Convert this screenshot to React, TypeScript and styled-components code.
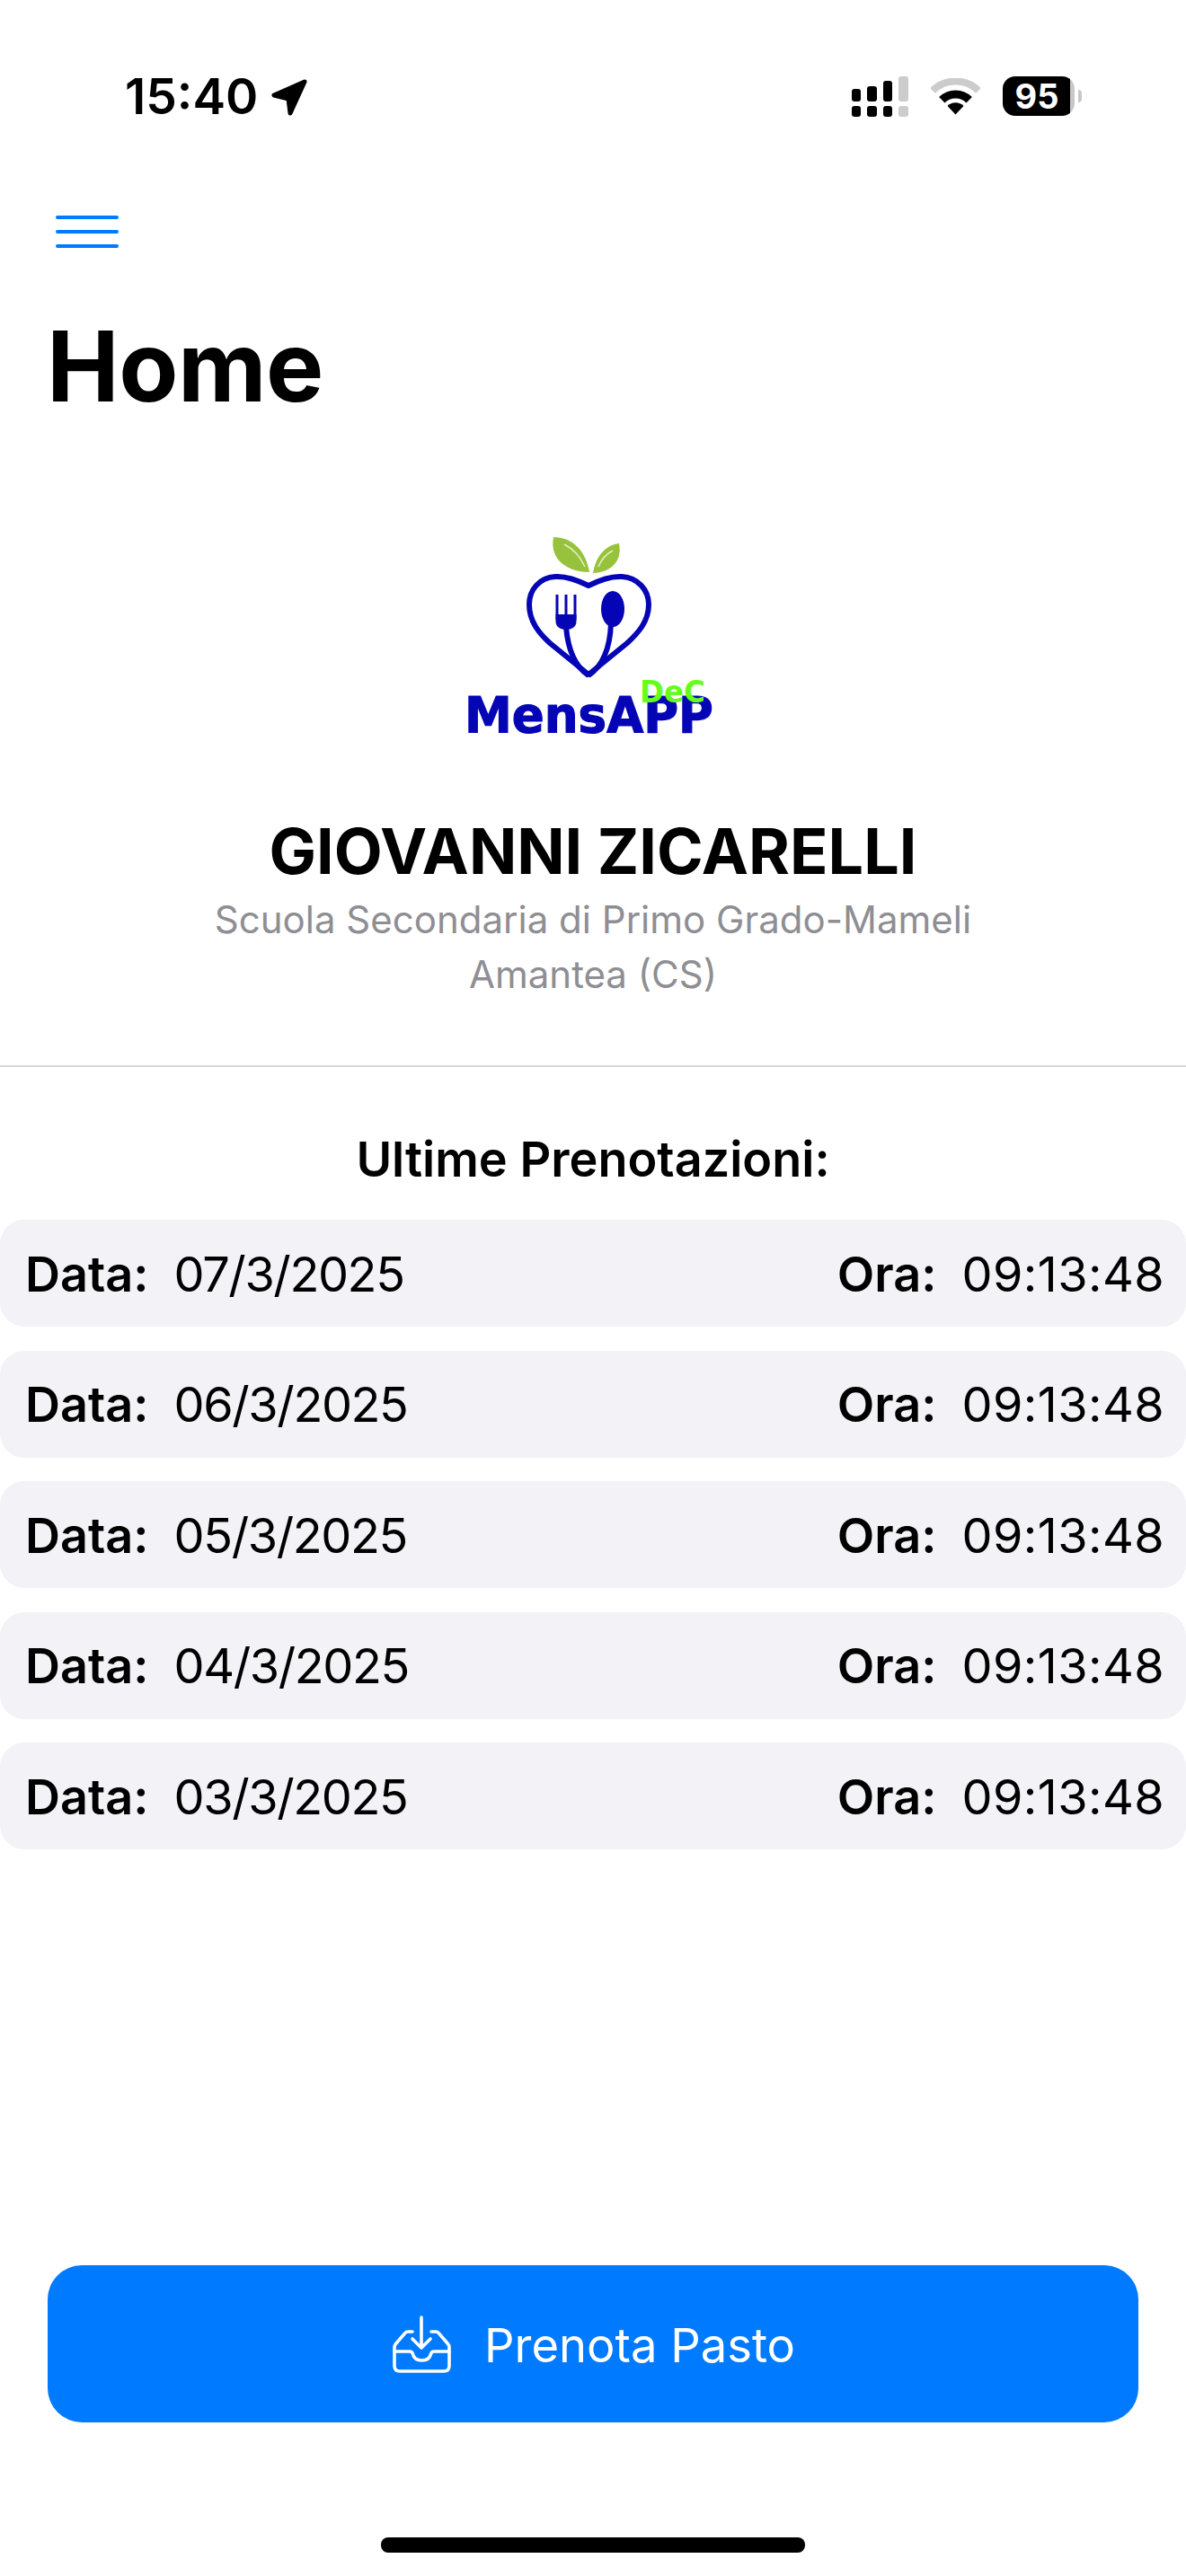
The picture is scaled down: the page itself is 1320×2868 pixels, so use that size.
import styled, { createGlobalStyle } from "styled-components";

const bookings = ["07/3/2025", "06/3/2025", "05/3/2025", "04/3/2025", "03/3/2025"];

export default function App() {
  return (
    <Page>
      <GlobalStyle />
      <StatusBar>
        <TimeGroup>
          <Clock>15:40</Clock>
          <svg width="42" height="43" viewBox="0 0 42 43">
            <path d="M38 5 L4 20 L20 24 L22 40 Z" fill="#000" stroke="#000" strokeWidth="5" strokeLinejoin="round" />
          </svg>
        </TimeGroup>
        <StatusIcons>
          <svg width="63" height="45" viewBox="0 0 63 45">
            <rect x="0" y="14" width="10" height="14" rx="3" fill="#000" />
            <rect x="0" y="33" width="10" height="12" rx="3" fill="#000" />
            <rect x="17" y="11" width="11" height="17" rx="3" fill="#000" />
            <rect x="17" y="33" width="11" height="12" rx="3" fill="#000" />
            <rect x="35" y="5" width="10" height="23" rx="3" fill="#000" />
            <rect x="35" y="33" width="10" height="12" rx="3" fill="#000" />
            <rect x="52" y="0" width="11" height="28" rx="3" fill="#ccc" />
            <rect x="52" y="33" width="11" height="12" rx="3" fill="#ccc" />
          </svg>
          <svg width="55" height="41" viewBox="0 0 55 41">
            <path d="M2 14 A36 36 0 0 1 53 14" fill="none" stroke="#ccc" strokeWidth="8" />
            <path d="M12.3 24.2 A21.5 21.5 0 0 1 42.7 24.2" fill="none" stroke="#000" strokeWidth="9" />
            <path d="M27.5 40.5 L18.5 31 A12.7 12.7 0 0 1 36.5 31 Z" fill="#000" />
          </svg>
          <Battery>
            <BatteryBody>95</BatteryBody>
            <BatteryTip />
          </Battery>
        </StatusIcons>
      </StatusBar>

      <MenuButton aria-label="Menu">
        <MenuLine />
        <MenuLine />
        <MenuLine />
      </MenuButton>

      <Title>Home</Title>

      <LogoWrap>
        <svg width="300" height="235" viewBox="510 595 300 235">
          <path d="M616 598 C638 598 652 614 656 637 C634 637 611 625 616 598 Z" fill="#97c23c" />
          <path d="M628 606 C638 611 646 620 651 631" fill="none" stroke="#e4f0c4" strokeWidth="1.5" />
          <path d="M689 605 C673 607 663 620 660 638 C679 637 693 626 689 605 Z" fill="#97c23c" />
          <path d="M682 613 C674 617 669 624 666 631" fill="none" stroke="#e4f0c4" strokeWidth="1.5" />
          <path
            d="M655 652 C645 647 632 641 618 642 C600 643 589 657 589 673 C589 692 600 705 612 716 L655 751 L698 716 C710 705 722 692 722 673 C722 657 710 643 692 642 C678 641 665 647 655 652 Z"
            fill="none"
            stroke="#0505b5"
            strokeWidth="6"
            strokeLinejoin="round"
          />
          <path d="M620 662 V690 M630 662 V690 M640 662 V690" stroke="#0505b5" strokeWidth="3" />
          <path d="M618.5 684 H641.5 V692 C641.5 698 636 701 630 701 C624 701 618.5 698 618.5 692 Z" fill="#0505b5" />
          <path d="M630 698 C632 722 640 742 655 752" fill="none" stroke="#0505b5" strokeWidth="6" />
          <ellipse cx="682" cy="678" rx="13" ry="20" fill="#0505b5" />
          <path d="M680 694 C679 722 670 742 655 752" fill="none" stroke="#0505b5" strokeWidth="6" />
          <LogoName x="517" y="815" textLength="277" lengthAdjust="spacingAndGlyphs">
            MensAPP
          </LogoName>
          <LogoBadge x="712" y="782" textLength="73" lengthAdjust="spacingAndGlyphs">
            DeC
          </LogoBadge>
        </svg>
      </LogoWrap>

      <UserName>GIOVANNI ZICARELLI</UserName>
      <School>
        Scuola Secondaria di Primo Grado-Mameli
        <br />
        Amantea (CS)
      </School>

      <Divider />

      <SectionTitle>Ultime Prenotazioni:</SectionTitle>

      <BookingList>
        {bookings.map((date) => (
          <BookingRow key={date}>
            <Field>
              <FieldLabel>Data:</FieldLabel>
              <FieldValue $spacing="-1.4px">{date}</FieldValue>
            </Field>
            <Field>
              <FieldLabel>Ora:</FieldLabel>
              <FieldValue $spacing="0.4px">09:13:48</FieldValue>
            </Field>
          </BookingRow>
        ))}
      </BookingList>

      <BookButton>
        <svg width="65" height="64" viewBox="0 0 65 64" fill="none" stroke="#fff" strokeWidth="3.6" strokeLinecap="round" strokeLinejoin="round">
          <path d="M32 2 V36 M22 26 L32 36 L42 26" />
          <path d="M22 18 H17 C15.5 18 14.5 18.6 13.5 19.8 L3.5 31.5 C2.4 32.8 2 34 2 35.5 V56 C2 60 4 62 8 62 H57 C61 62 63 60 63 56 V35.5 C63 34 62.6 32.8 61.5 31.5 L51.5 19.8 C50.5 18.6 49.5 18 48 18 H43" />
          <path d="M2 40 H19 C21 40 22 41 22.5 43 C23.5 47 27 50 32.5 50 C38 50 41.5 47 42.5 43 C43 41 44 40 46 40 H63" />
        </svg>
        <ButtonLabel>Prenota Pasto</ButtonLabel>
      </BookButton>

      <HomeIndicator />
    </Page>
  );
}

const GlobalStyle = createGlobalStyle`
  html, body {
    margin: 0;
    padding: 0;
    background: #fff;
  }
  * {
    box-sizing: border-box;
  }
`;

const Page = styled.div`
  width: 1320px;
  height: 2868px;
  display: flex;
  flex-direction: column;
  overflow: hidden;
  background: #fff;
  color: #000;
  font-family: Inter, "Liberation Sans", sans-serif;
`;

const StatusBar = styled.div`
  height: 135px;
  padding: 79px 116px 0 139px;
  display: flex;
  justify-content: space-between;
  align-items: center;
`;

const TimeGroup = styled.div`
  display: flex;
  align-items: center;
  gap: 14px;
`;

const Clock = styled.span`
  font-size: 55px;
  line-height: 56px;
  font-weight: 600;
`;

const StatusIcons = styled.div`
  display: flex;
  align-items: center;
  gap: 25px;
`;

const Battery = styled.div`
  display: flex;
  align-items: center;
  gap: 4px;
`;

const BatteryBody = styled.div`
  width: 80px;
  height: 44px;
  border-radius: 14px;
  background: linear-gradient(to right, #000 94%, #c8c8c8 94%);
  color: #fff;
  font-size: 38px;
  line-height: 44px;
  font-weight: 700;
  text-align: center;
  padding-right: 4px;
`;

const BatteryTip = styled.div`
  width: 4px;
  height: 14px;
  border-radius: 0 4px 4px 0;
  background: #c8c8c8;
`;

const MenuButton = styled.button`
  margin: 105px 0 0 62px;
  width: 70px;
  height: 36px;
  padding: 0;
  border: 0;
  background: none;
  display: flex;
  flex-direction: column;
  justify-content: space-between;
`;

const MenuLine = styled.span`
  display: block;
  height: 4px;
  border-radius: 2px;
  background: #007aff;
`;

const Title = styled.h1`
  margin: 72px 0 0 52px;
  font-size: 108px;
  line-height: 120px;
  font-weight: 700;
  letter-spacing: -0.5px;
`;

const LogoWrap = styled.div`
  margin-top: 127px;
  height: 235px;
  display: flex;
  justify-content: center;
`;

const LogoName = styled.text`
  font-family: "DejaVu Sans", sans-serif;
  font-size: 55px;
  font-weight: 700;
  fill: #0505b5;
  stroke: #0505b5;
  stroke-width: 1.2px;
`;

const LogoBadge = styled.text`
  font-family: "DejaVu Sans", sans-serif;
  font-size: 33px;
  font-weight: 700;
  fill: #66ff1a;
`;

const UserName = styled.div`
  margin-top: 76px;
  font-size: 70px;
  line-height: 84px;
  font-weight: 700;
  text-align: center;
`;

const School = styled.div`
  margin-top: 3px;
  font-size: 42px;
  line-height: 61px;
  color: #8e8e93;
  text-align: center;
`;

const Divider = styled.div`
  margin-top: 71px;
  height: 2px;
  background: #d9d9dc;
`;

const SectionTitle = styled.div`
  margin-top: 73px;
  font-size: 54px;
  line-height: 60px;
  font-weight: 600;
  text-align: center;
`;

const BookingList = styled.div`
  margin-top: 37px;
  display: flex;
  flex-direction: column;
  gap: 26.5px;
`;

const BookingRow = styled.div`
  height: 119px;
  padding: 2px 24px 0 28px;
  border-radius: 27px;
  background: #f2f2f7;
  display: flex;
  justify-content: space-between;
  align-items: center;
`;

const Field = styled.div`
  display: flex;
  align-items: center;
  gap: 28px;
  font-size: 54px;
  line-height: 64px;
`;

const FieldLabel = styled.span`
  font-weight: 600;
`;

const FieldValue = styled.span<{ $spacing: string }>`
  font-weight: 400;
  letter-spacing: ${(p) => p.$spacing};
`;

const BookButton = styled.button`
  margin: auto 53px 0;
  height: 175px;
  padding: 0 0 0 2px;
  border: 0;
  border-radius: 38px;
  background: #007aff;
  color: #fff;
  font-family: inherit;
  font-size: 52.5px;
  font-weight: 400;
  display: flex;
  align-items: center;
  justify-content: center;
  gap: 37px;
`;

const ButtonLabel = styled.span`
  padding-top: 2px;
`;

const HomeIndicator = styled.div`
  margin: 128px auto 26px;
  width: 472px;
  height: 17px;
  border-radius: 8px;
  background: #000;
`;
